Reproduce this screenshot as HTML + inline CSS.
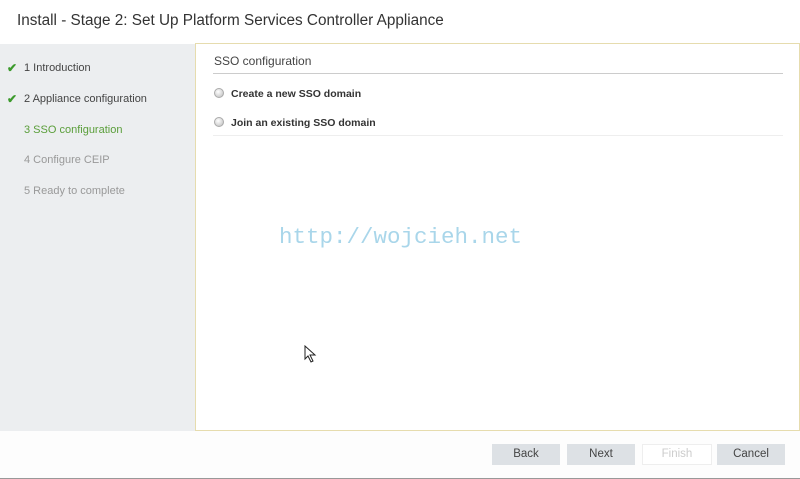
<!DOCTYPE html>
<html><head><style>
body{margin:0;width:800px;height:479px;background:#fff;font-family:"Liberation Sans",sans-serif;overflow:hidden;position:relative}
.title{position:absolute;left:17px;top:12px;font-size:15.3px;color:#333}
.side{position:absolute;left:0;top:44px;width:195px;height:387px;background:#eceef0}
.step{position:absolute;left:24px;font-size:11px;color:#444}
.chk{position:absolute;left:-17px;top:-1px;color:#3c9a2c;font-size:12px;font-weight:bold}
.main{position:absolute;left:195px;top:43px;width:603px;height:386px;border:1px solid #e6dcae;background:#fff}
.h{position:absolute;left:18px;top:10px;font-size:12px;color:#444}
.line{position:absolute;left:17px;width:570px;height:1px;background:#ddd}
.opt{position:absolute;left:18px;font-size:10.5px;color:#333;font-weight:bold}
.opt i{display:inline-block;width:8px;height:8px;border-radius:50%;background:radial-gradient(circle at 40% 35%,#fff,#bbb);border:1px solid #aaa;margin-right:7px;vertical-align:-1px}
.wm{position:absolute;left:279px;top:224px;font-family:"Liberation Mono",monospace;font-size:22.5px;color:#a9d6ea}
.foot{position:absolute;left:0;top:431px;width:800px;height:47px;background:#fdfdfd;border-bottom:1px solid #999}
.btn{position:absolute;top:444px;width:68px;height:21px;background:#dde1e5;color:#444;font-size:11.5px;text-align:center;line-height:21px}
</style></head><body>
<div class="title">Install - Stage 2: Set Up Platform Services Controller Appliance</div>
<div class="side">
<div class="step" style="top:18px"><span class="chk">✔</span>1 Introduction</div>
<div class="step" style="top:49px"><span class="chk">✔</span>2 Appliance configuration</div>
<div class="step" style="top:80px;color:#5a9e3a">3 SSO configuration</div>
<div class="step" style="top:110px;color:#999">4 Configure CEIP</div>
<div class="step" style="top:141px;color:#999">5 Ready to complete</div>
</div>
<div class="main">
<div class="h">SSO configuration</div>
<div class="line" style="top:29px;background:#ccc"></div>
<div class="opt" style="top:44px"><i></i>Create a new SSO domain</div>
<div class="opt" style="top:73px"><i></i>Join an existing SSO domain</div>
<div class="line" style="top:91px;background:#eee"></div>
</div>
<div class="wm">http://wojcieh.net</div>
<svg style="position:absolute;left:304px;top:345px" width="14" height="18"><path d="M1 1 L1 14 L4 11 L7 17 L9 16 L6 10 L11 10 Z" fill="#fff" stroke="#222" stroke-width="1"/></svg>
<div class="foot"></div>
<div class="btn" style="left:492px">Back</div>
<div class="btn" style="left:567px">Next</div>
<div class="btn" style="left:642px;background:#fff;border:1px solid #eee;color:#ccc;height:19px;line-height:19px">Finish</div>
<div class="btn" style="left:717px">Cancel</div>
</body></html>
